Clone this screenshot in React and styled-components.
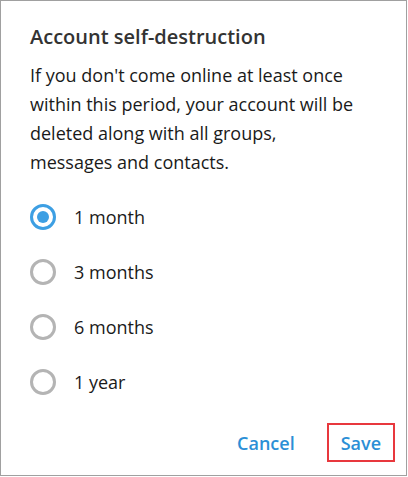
import React, { useState } from "react";
import styled, { createGlobalStyle } from "styled-components";

const GlobalStyle = createGlobalStyle`
  body {
    margin: 0;
    background: #ffffff;
    font-family: "Open Sans", "Noto Sans", sans-serif;
  }
`;

const Dialog = styled.div`
  box-sizing: border-box;
  width: 407px;
  height: 476px;
  border: 1px solid #a0a0a0;
  background: #ffffff;
  display: flex;
  flex-direction: column;
`;

const Body = styled.div`
  padding: 22px 20px 0 29px;
  flex: 1;
`;

const Title = styled.h2`
  margin: 0;
  font-size: 20px;
  font-weight: 600;
  line-height: 28px;
  color: #333333;
`;

const Description = styled.p`
  margin: 10px 0 0;
  max-width: 331px;
  font-size: 18px;
  line-height: 29px;
  color: #1a1a1a;
`;

const Options = styled.div`
  margin-top: 12px;
  display: flex;
  flex-direction: column;
`;

const Option = styled.label`
  display: flex;
  align-items: center;
  height: 55px;
  gap: 18px;
  cursor: pointer;
  font-size: 18px;
  color: #1a1a1a;
`;

const Circle = styled.span`
  box-sizing: border-box;
  width: 26px;
  height: 26px;
  border-radius: 50%;
  border: 3px solid ${(p) => (p.$checked ? "#3d9fe3" : "#b4b4b4")};
  display: flex;
  align-items: center;
  justify-content: center;
  flex-shrink: 0;

  &::after {
    content: "";
    width: 12px;
    height: 12px;
    border-radius: 50%;
    background: #3d9fe3;
    display: ${(p) => (p.$checked ? "block" : "none")};
  }
`;

const Footer = styled.div`
  display: flex;
  justify-content: flex-end;
  gap: 18px;
  padding: 0 11px 13px 0;
`;

const Button = styled.button`
  box-sizing: border-box;
  height: 39px;
  padding: 0 12px;
  background: transparent;
  border: 2px solid ${(p) => (p.$highlight ? "#e8383d" : "transparent")};
  font-family: inherit;
  font-size: 18px;
  font-weight: 600;
  color: #2b8fd6;
  cursor: pointer;
`;

const periods = ["1 month", "3 months", "6 months", "1 year"];

export default function App() {
  const [selected, setSelected] = useState(0);

  return (
    <>
      <GlobalStyle />
      <Dialog>
        <Body>
          <Title>Account self-destruction</Title>
          <Description>
            If you don't come online at least once within this period, your
            account will be deleted along with all groups, messages and
            contacts.
          </Description>
          <Options>
            {periods.map((p, i) => (
              <Option key={p} onClick={() => setSelected(i)}>
                <Circle $checked={selected === i} />
                {p}
              </Option>
            ))}
          </Options>
        </Body>
        <Footer>
          <Button>Cancel</Button>
          <Button $highlight>Save</Button>
        </Footer>
      </Dialog>
    </>
  );
}
